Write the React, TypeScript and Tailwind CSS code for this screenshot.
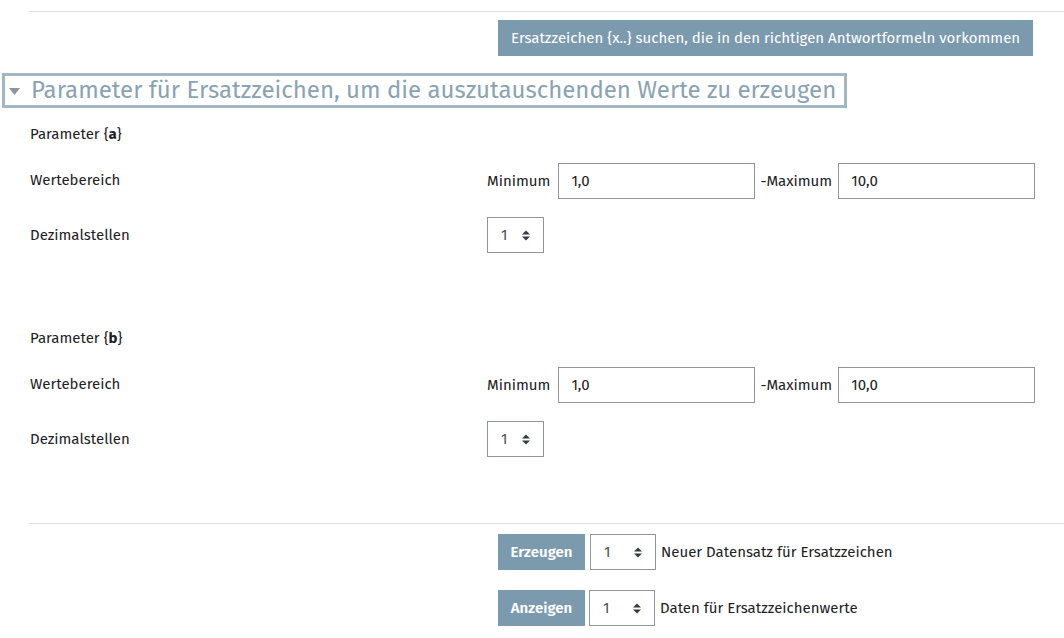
import React from "react";

const font = { fontFamily: '"Fira Sans", Lato, "Open Sans", sans-serif' };

function Updown() {
  return (
    <svg width="8" height="11" viewBox="0 0 8 11" className="shrink-0">
      <path d="M0 4.5 L4 0.5 L8 4.5 Z" fill="#343a40" />
      <path d="M0 6.5 L4 10.5 L8 6.5 Z" fill="#343a40" />
    </svg>
  );
}

function Select({ w = "w-[57px]" }: { w?: string }) {
  return (
    <div className={`${w} h-[36px] border border-[#8f959e] bg-white flex items-center justify-between pl-[13px] pr-[13px] text-[15px] text-[#495057]`}>
      <span>1</span>
      <Updown />
    </div>
  );
}

function Input({ value }: { value: string }) {
  return (
    <div className="w-[197px] h-[36px] border border-[#8f959e] bg-white flex items-center pl-[12px] text-[15px] text-[#1d2125]">
      {value}
    </div>
  );
}

function ParamBlock({ name }: { name: string }) {
  return (
    <div className="flex flex-col">
      <div className="h-[30px] flex items-center text-[15px] text-[#1d2125]">
        Parameter {"{"}
        <b className="font-bold">{name}</b>
        {"}"}
      </div>
      <div className="mt-[14px] h-[36px] grid grid-cols-[457px_1fr] items-center">
        <div className="text-[15px] text-[#1d2125] -mt-[2px]">Wertebereich</div>
        <div className="flex items-center text-[15px] text-[#1d2125]">
          <span className="mr-[8px]">Minimum</span>
          <Input value="1,0" />
          <span className="ml-[5px] mr-[6px]">-Maximum</span>
          <Input value="10,0" />
        </div>
      </div>
      <div className="mt-[18px] h-[36px] grid grid-cols-[457px_1fr] items-center">
        <div className="text-[15px] text-[#1d2125]">Dezimalstellen</div>
        <Select />
      </div>
    </div>
  );
}

export default function App() {
  return (
    <div className="w-[1064px] h-[638px] bg-white overflow-hidden" style={font}>
      <div className="ml-[29px] mt-[11px] border-t border-[#dee2e6]" />
      <div className="mt-[8px] pl-[498px] flex">
        <button className="h-[36px] px-[13px] bg-[#7b9aae] text-white text-[15px] whitespace-nowrap">
          Ersatzzeichen {"{x..}"} suchen, die in den richtigen Antwortformeln vorkommen
        </button>
      </div>
      <div className="mt-[17px] ml-[2px] w-[845px] h-[35px] border-[3px] border-[#a2b7c4] flex items-center">
        <svg width="11" height="7" viewBox="0 0 11 7" className="shrink-0 ml-[4px] mr-[11px] mt-[2px]">
          <path d="M0 0 L11 0 L5.5 7 Z" fill="#8a959f" />
        </svg>
        <span className="text-[24px] leading-none text-[#8aa3b4] whitespace-nowrap -mt-[2px]">
          Parameter für Ersatzzeichen, um die auszutauschenden Werte zu erzeugen
        </span>
      </div>
      <div className="pl-[30px] mt-[11px]">
        <ParamBlock name="a" />
        <div className="mt-[70px]">
          <ParamBlock name="b" />
        </div>
      </div>
      <div className="ml-[29px] mt-[66px] border-t border-[#dee2e6]" />
      <div className="pl-[498px] mt-[10px] flex items-center text-[15px] text-[#1d2125]">
        <button className="h-[36px] w-[87px] bg-[#7b9aae] text-white font-semibold text-[15px]">Erzeugen</button>
        <div className="ml-[5px]">
          <Select w="w-[66px]" />
        </div>
        <span className="ml-[5px]">Neuer Datensatz für Ersatzzeichen</span>
      </div>
      <div className="pl-[498px] mt-[20px] flex items-center text-[15px] text-[#1d2125]">
        <button className="h-[36px] w-[87px] bg-[#7b9aae] text-white font-semibold text-[15px]">Anzeigen</button>
        <div className="ml-[4px]">
          <Select w="w-[66px]" />
        </div>
        <span className="ml-[5px]">Daten für Ersatzzeichenwerte</span>
      </div>
    </div>
  );
}
